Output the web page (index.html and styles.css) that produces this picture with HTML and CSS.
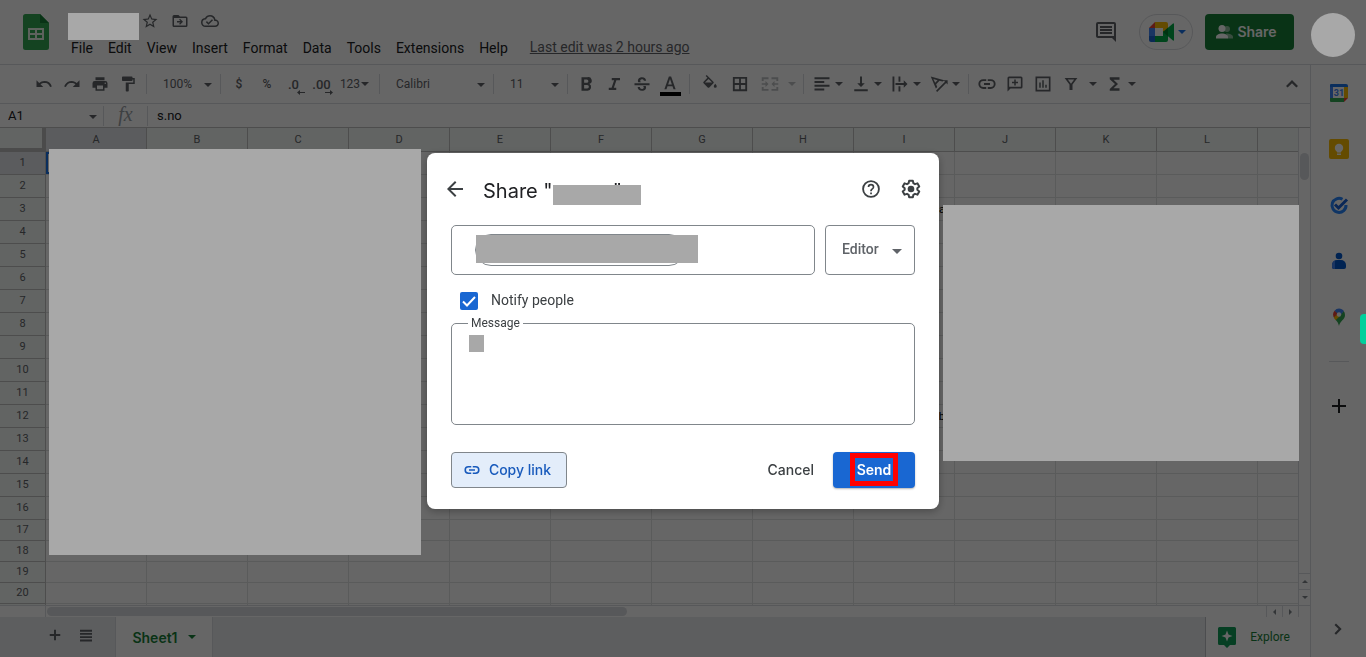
FILE: index.html
```html
<!DOCTYPE html>
<html lang="en">
<head>
<meta charset="utf-8">
<title>Sheet - Share</title>
<link rel="stylesheet" href="styles.css">
</head>
<body>
<div class="app">
  <header class="header">
    <svg class="logo" width="26" height="36" viewBox="0 0 26 36"><path fill="#34a853" d="M2.500 0H17l9 9v24.500A2.500 2.500 0 0 1 23.500 36h-21A2.500 2.500 0 0 1 0 33.500v-31A2.500 2.500 0 0 1 2.500 0z"/><path fill="#188038" d="M17 0l9 9h-9z"/><path fill="#e8f5e9" fill-rule="evenodd" d="M5 14h16v12H5zm2 2v3h5v-3zm7 0v3h5v-3zm-7 5v3h5v-3zm7 0v3h5v-3z"/></svg>
    <div class="doc">
      <div class="doc-top">
        <button class="mini" aria-label="Star"><svg width="18" height="18" viewBox="0 0 24 24"><path d="M22 9.240l-7.190-.62L12 2 9.190 8.630 2 9.240l5.460 4.730L5.820 21 12 17.270 18.180 21l-1.630-7.030L22 9.240zM12 15.400l-3.760 2.270 1-4.280-3.320-2.880 4.380-.38L12 6.100l1.710 4.040 4.380.38-3.320 2.880 1 4.280L12 15.400z"/></svg></button>
        <button class="mini" aria-label="Move"><svg width="18" height="18" viewBox="0 0 24 24"><path d="M20 6h-8l-2-2H4a2 2 0 0 0-2 2v12a2 2 0 0 0 2 2h16a2 2 0 0 0 2-2V8a2 2 0 0 0-2-2zm0 12H4V8h16v10zm-8-1l4-4-4-4-1.200 1.200L12.700 12H8v2h4.700l-1.900 1.800z"/></svg></button>
        <button class="mini" aria-label="Saved"><svg width="18" height="18" viewBox="0 0 24 24"><path d="M19.350 10.040A7.490 7.490 0 0 0 12 4C9.110 4 6.600 5.640 5.350 8.040A5.994 5.994 0 0 0 0 14c0 3.310 2.690 6 6 6h13c2.760 0 5-2.240 5-5 0-2.640-2.050-4.780-4.650-4.960zM19 18H6a4 4 0 0 1-.42-7.970l1.070-.11.500-.95A5.470 5.470 0 0 1 12 6c2.620 0 4.880 1.860 5.390 4.430l.3 1.500 1.530.11A2.980 2.980 0 0 1 19 18zm-9-3.820l-2.090-2.090L6.500 13.500 10 17l6.010-6.010-1.410-1.410z"/></svg></button>
      </div>
      <nav class="menu">
        <button>File</button><button>Edit</button><button>View</button><button>Insert</button><button>Format</button><button>Data</button><button>Tools</button><button>Extensions</button><button>Help</button>
        <a class="last" href="#">Last edit was 2 hours ago</a>
      </nav>
    </div>
    <div class="actions">
      <button class="plain" aria-label="Comments"><svg width="24" height="24" viewBox="0 0 24 24"><path fill="#5f6368" d="M22 4a2 2 0 0 0-2-2H4a2 2 0 0 0-2 2v12c0 1.100.9 2 2 2h14l4 4V4zm-2 0v12H4V4h16zM6 12h12v2H6zm0-3h12v2H6zm0-3h12v2H6z"/></svg></button>
      <button class="meet" aria-label="Meet"><svg width="25" height="20" viewBox="0 0 25 20"><path fill="#ea4335" d="M0 6l6-6v6z"/><path fill="#fbbc04" d="M6 0h11a2 2 0 0 1 2 2v5l-5 4V6H6z"/><path fill="#4285f4" d="M0 6h6v8H0z"/><path fill="#1967d2" d="M0 14h6v6H2a2 2 0 0 1-2-2z"/><path fill="#00ac47" d="M6 14h8V9l5 4v5a2 2 0 0 1-2 2H6z"/><path fill="#00ac47" d="M14 10l10-8.500a.6.6 0 0 1 1 .5v16a.6.6 0 0 1-1 .5z"/><path fill="#00832d" d="M14 10l5-4.200v8.400z"/><path fill="#fff" d="M6 6h8v8H6z"/></svg><i class="caret blue"></i></button>
      <button class="share"><svg width="17" height="14" viewBox="0 0 17 14"><circle cx="11" cy="4" r="3" fill="#8fbf9d"/><path fill="#8fbf9d" d="M10 8.500c4 0 7 1.500 7 3.500v1.500h-5z"/><circle cx="6" cy="3.500" r="3.500" fill="#fff"/><path fill="#fff" d="M0 13.500V12c0-2 3-3.500 6-3.500s6 1.500 6 3.500v1.500z"/></svg>Share</button>
    </div>
  </header>

  <div class="body">
    <main class="main">
      <div class="toolbar">
        <button class="tb" aria-label="Undo"><svg viewBox="0 0 24 24"><path d="M12.500 8c-2.650 0-5.050.99-6.900 2.600L2 7v9h9l-3.620-3.620A8 8 0 0 1 20.100 16l2.370-.78A10.500 10.500 0 0 0 12.500 8z"/></svg></button>
        <button class="tb" aria-label="Redo"><svg viewBox="0 0 24 24"><path d="M18.400 10.600A10.480 10.480 0 0 0 1.540 15.220L3.900 16a8 8 0 0 1 12.720-3.620L13 16h9V7l-3.600 3.600z"/></svg></button>
        <button class="tb" aria-label="Print"><svg viewBox="0 0 24 24"><path d="M19 8H5a3 3 0 0 0-3 3v6h4v4h12v-4h4v-6a3 3 0 0 0-3-3zm-3 11H8v-5h8v5zm3-7a1 1 0 1 1 0-2 1 1 0 0 1 0 2zM18 3H6v4h12V3z"/></svg></button>
        <button class="tb" aria-label="Paint format"><svg viewBox="0 0 24 24"><path d="M18 4V3a1 1 0 0 0-1-1H5a1 1 0 0 0-1 1v4a1 1 0 0 0 1 1h12a1 1 0 0 0 1-1V6h1v4H9v11a1 1 0 0 0 1 1h2a1 1 0 0 0 1-1v-9h8V4h-3z"/></svg></button>
        <i class="sep"></i>
        <label class="pick"><select class="zoom" aria-label="Zoom"><option>100%</option></select></label>
        <i class="sep"></i>
        <button class="tb bold">$</button>
        <button class="tb bold">%</button>
        <button class="tb bold dec">.0<svg class="under" viewBox="0 0 8 5"><path d="M0 2.500L3 0v2h5v1H3v2z"/></svg></button>
        <button class="tb bold dec">.00<svg class="under" viewBox="0 0 8 5"><path d="M8 2.500L5 0v2H0v1h5v2z"/></svg></button>
        <button class="more">123<i class="caret"></i></button>
        <i class="sep"></i>
        <label class="pick"><select class="font" aria-label="Font"><option>Calibri</option></select></label>
        <i class="sep"></i>
        <label class="pick"><select class="zoom" aria-label="Font size"><option>11</option></select></label>
        <i class="sep"></i>
        <button class="tb" aria-label="Bold"><svg viewBox="0 0 24 24"><path d="M16.500 11.800A4.600 4.600 0 0 0 13.500 3H6v18h8.200a5 5 0 0 0 2.300-9.200zM9.500 6H13a2.200 2.200 0 0 1 0 4.400H9.500zm4 12h-4v-4.700h4a2.300 2.300 0 0 1 0 4.700z"/></svg></button>
        <button class="tb" aria-label="Italic"><svg viewBox="0 0 24 24"><path d="M9 4v3h3.200L8.800 17H5v3h10v-3h-3.200l3.400-10H20V4z"/></svg></button>
        <button class="tb" aria-label="Strikethrough"><svg viewBox="0 0 24 24"><path d="M2 11h20v2.500H2zM7 9.500C5.500 6 8 3 12 3c3.500 0 5.500 2 5.500 4.800h-3C14.500 6.300 13.500 5.500 12 5.500c-2.300 0-3.200 2-1.500 4zM17 14.500c1.500 3.500-1 6.500-5 6.500-3.500 0-5.800-2-5.800-5h3c0 1.600 1.100 2.500 2.800 2.500 2.300 0 3.200-2 1.500-4z"/></svg></button>
        <button class="tb color" aria-label="Text color"><svg viewBox="0 0 24 24"><path d="M10.500 2L4.500 19h2.800l1.400-4h6.600l1.400 4h2.800l-6-17zM9.500 12.500L12 5.300l2.500 7.200z"/></svg></button>
        <i class="sep wide"></i>
        <button class="tb big" aria-label="Fill color"><svg viewBox="0 0 24 24"><path d="M16.560 8.940L7.620 0 6.210 1.410l2.380 2.380-5.150 5.150a1.500 1.500 0 0 0 0 2.120l5.500 5.500a1.500 1.500 0 0 0 2.120 0l5.500-5.500a1.500 1.500 0 0 0 0-2.120zM5.210 10L10 5.210 11.500 6.700 14.790 10zM19 11.500s-2 2.170-2 3.500a2 2 0 0 0 4 0c0-1.330-2-3.500-2-3.500z"/></svg></button>
        <button class="tb big" aria-label="Borders"><svg viewBox="0 0 24 24"><path fill-rule="evenodd" d="M2.500 2.500h19v19h-19zm2.500 2.500v5.800h5.800V5zm8.200 0v5.800H19V5zM5 13.200V19h5.800v-5.800zm8.200 0V19H19v-5.800z"/></svg></button>
        <button class="tb big faded" aria-label="Merge cells"><svg viewBox="0 0 24 24"><path d="M1 3h9v2.500H3.500V8H1zM14 3h9v5h-2.500V5.500H14zM1 16h2.500v2.500H10V21H1zM20.500 16H23v5h-9v-2.500h6.500zM1 11h5V8l4 4-4 4v-3H1zM23 11h-5V8l-4 4 4 4v-3h5z"/></svg></button>
        <button class="drop narrow faded" aria-label="Merge options"><i class="caret"></i></button>
        <i class="sep"></i>
        <button class="pair" aria-label="Horizontal align"><svg viewBox="0 0 24 24"><path d="M2 3h20v2.500H2zM2 8h13v2.500H2zM2 13h20v2.500H2zM2 18h13v2.500H2z"/></svg><i class="caret"></i></button>
        <button class="pair" aria-label="Vertical align"><svg viewBox="0 0 24 24"><path d="M10.700 2h2.600v9H17l-5 5-5-5h3.700zM3 19h18v2.500H3z"/></svg><i class="caret"></i></button>
        <button class="pair" aria-label="Wrap"><svg viewBox="0 0 24 24"><path d="M2 2h2.500v20H2zM10 2h2.500v7H10zM10 15h2.500v7H10zM6 10.800h11V7l5 5-5 5v-3.800H6z"/></svg><i class="caret"></i></button>
        <button class="pair" aria-label="Rotate"><svg viewBox="0 0 24 24"><path d="M1 2l18 5-2.300 1.500-4-.9-4.500 4.600 1.400 3.900-1.800 2L1 2zm3.500 3.300l2.400 5 3.200-3.300zM8 21L20 9l-2-2h5.500v5.500l-2-2-12 12z"/></svg><i class="caret"></i></button>
        <i class="sep"></i>
        <button class="tb" aria-label="Link"><svg viewBox="0 0 24 24"><path d="M3 12a4 4 0 0 1 4-4h4V5.500H7a6.500 6.500 0 0 0 0 13h4V16H7a4 4 0 0 1-4-4zm5 1.300h8v-2.600H8zM17 5.500h-4V8h4a4 4 0 0 1 0 8h-4v2.500h4a6.500 6.500 0 0 0 0-13z"/></svg></button>
        <button class="tb" aria-label="Comment"><svg viewBox="0 0 24 24"><path fill-rule="evenodd" d="M2 22V4a2 2 0 0 1 2-2h16a2 2 0 0 1 2 2v12a2 2 0 0 1-2 2H6zM4.200 4.200v11.600h15.600V4.200zM11 6h2v3h3v2h-3v3h-2v-3H8V9h3z"/></svg></button>
        <button class="tb" aria-label="Chart"><svg viewBox="0 0 24 24"><path fill-rule="evenodd" d="M2 2h20v20H2zm2.200 2.200v15.600h15.600V4.200zM7 10h2v7H7zm4-3h2v10h-2zm4 6h2v4h-2z"/></svg></button>
        <button class="tb" aria-label="Filter"><svg viewBox="0 0 24 24"><path fill-rule="evenodd" d="M3.500 4h17L14 12.500V20h-4v-7.500zm4.300 2L12 11.500 16.200 6z"/></svg></button>
        <button class="drop" aria-label="Filter views"><i class="caret"></i></button>
        <button class="pair" aria-label="Functions"><svg viewBox="0 0 24 24"><path d="M18 3H5v2.500l7 6.500-7 6.500V21h13v-3.200H10l6-5.800-6-5.800h8z"/></svg><i class="caret"></i></button>
        <button class="tb collapse" aria-label="Hide menus"><svg viewBox="0 0 24 24"><path d="M4 14.500l8-8 8 8-2.200 2.200L12 11l-5.800 5.700z"/></svg></button>
      </div>

      <div class="formula">
        <label class="pick"><input class="name" value="A1" aria-label="Name box"></label>
        <i class="sep tall"></i>
        <span class="fx">fx</span>
        <i class="sep tall"></i>
        <input class="value" value="s.no" aria-label="Formula">
      </div>

      <div class="sheet">
        <div class="grid"><table id="cells"></table></div>
        <div class="vbar"><i class="vthumb"></i><button aria-label="Up"><i class="tri up"></i></button><button aria-label="Down"><i class="tri down"></i></button></div>
      </div>
      <div class="hbar"><div class="track"><i class="hthumb"></i></div><button aria-label="Left"><i class="tri left"></i></button><button aria-label="Right"><i class="tri right"></i></button><span class="nook"></span></div>

      <footer class="tabs">
        <button class="tb" aria-label="Add sheet"><svg viewBox="0 0 24 24"><path d="M10.700 5h2.600v5.700H19v2.600h-5.700V19h-2.600v-5.700H5v-2.600h5.700z"/></svg></button>
        <button class="tb" aria-label="All sheets"><svg viewBox="0 0 24 24"><path d="M4 5h16v2.500H4zM4 9.300h16v2.500H4zM4 13.600h16v2.500H4zM4 18h16v2.500H4z"/></svg></button>
        <button class="tab">Sheet1<i class="caret"></i></button>
        <button class="explore"><svg width="18" height="21" viewBox="0 0 18 21"><path fill="#0f9d58" d="M1.500 0h15A1.500 1.500 0 0 1 18 1.500v15a1.500 1.500 0 0 1-1.500 1.500H12l-3 3-3-3H1.500A1.500 1.500 0 0 1 0 16.500v-15A1.500 1.500 0 0 1 1.500 0z"/><path fill="#fff" d="M9 3.500l1.500 4 4 1.500-4 1.500-1.500 4-1.500-4-4-1.500 4-1.500z"/></svg>Explore</button>
      </footer>
    </main>

    <aside class="side">
      <button aria-label="Calendar"><svg width="20" height="20" viewBox="0 0 20 20"><path fill="#1a73e8" d="M2 1h15a2 2 0 0 1 2 2v2H1V2a1 1 0 0 1 1-1z"/><path fill="#4285f4" d="M1 4h4v11H1z"/><path fill="#fbbc04" d="M15 4h4v11h-4z"/><path fill="#34a853" d="M1 15h14v4H2a1 1 0 0 1-1-1z"/><path fill="#ea4335" d="M15 15h4l-4 4z"/><path fill="#fff" d="M4 4h11v11H4z"/><text x="10" y="13" text-anchor="middle" class="cal">31</text></svg></button>
      <button aria-label="Keep"><svg width="20" height="20" viewBox="0 0 20 20"><rect width="20" height="20" rx="2" fill="#fbbc04"/><circle cx="10" cy="9" r="4.200" fill="#fff"/><path fill="#fff" d="M8 11h4v2.500H8zM8 14.500h4V16H8z"/></svg></button>
      <button aria-label="Tasks"><svg width="20" height="20" viewBox="0 0 20 20"><path fill="none" stroke="#2684fc" stroke-width="3" d="M13.500 4.300A7 7 0 1 0 17 10"/><path fill="none" stroke="#1a62d6" stroke-width="3" d="M6 9.500l3.500 3.500L18 4.500"/></svg></button>
      <button aria-label="Contacts"><svg width="20" height="20" viewBox="0 0 20 20"><circle cx="10" cy="5" r="3.300" fill="#0057cc"/><path fill="#0057cc" d="M3 14a5 5 0 0 1 5-5h4a5 5 0 0 1 5 5v2a2 2 0 0 1-2 2H5a2 2 0 0 1-2-2z"/><path fill="#4285f4" d="M3 14a5 5 0 0 1 3-4.600V18H5a2 2 0 0 1-2-2z"/></svg></button>
      <button aria-label="Maps"><svg width="20" height="20" viewBox="0 0 20 20"><path fill="#34a853" d="M16 8c0 5-5 5.500-6 11-.6-3-2-4.500-3.500-6.200L14.600 4A6.300 6.300 0 0 1 16 8z"/><path fill="#4285f4" d="M10 1.500c2 0 3.800 1 4.900 2.600L10 10 5.500 3.700A6 6 0 0 1 10 1.500z"/><path fill="#ea4335" d="M5.500 3.700L10 8l-4.500 3.500C3.500 9 3.600 5.800 5.500 3.700z"/><path fill="#fbbc04" d="M4.800 10.500L8.500 7l2 2.500-4 3.800z"/><circle cx="10" cy="7.500" r="2.200" fill="#fff"/></svg></button>
      <hr>
      <button aria-label="Add-ons"><svg width="20" height="20" viewBox="0 0 20 20"><path fill="#202124" d="M9 3h2v6h6v2h-6v6H9v-6H3V9h6z"/></svg></button>
      <button class="hide" aria-label="Hide side panel"><svg width="18" height="18" viewBox="0 0 24 24"><path fill="#5f6368" d="M6 6.500l5.500 5.500L6 17.500l2 2 7.500-7.500L8 4.500z"/></svg></button>
    </aside>
  </div>
</div>

<div class="scrim">
  <section class="dialog" role="dialog" aria-labelledby="title">
    <div class="head">
      <button class="plain" aria-label="Back"><svg width="24" height="24" viewBox="0 0 24 24"><path fill="#3c4043" d="M20 11H7.830l5.590-5.590L12 4l-8 8 8 8 1.410-1.410L7.830 13H20z"/></svg></button>
      <h1 id="title">Share "<span class="hidden-name">v<span class="mask"></span></span>"</h1>
      <button class="plain" aria-label="Help"><svg width="20" height="20" viewBox="0 0 24 24"><circle cx="12" cy="12" r="9.500" fill="none" stroke="#3c4043" stroke-width="2.200"/><path fill="#3c4043" d="M11 16.200h2.100v2.100H11zM12 5.700A4 4 0 0 0 8 9.700h2a2 2 0 1 1 4 0c0 2-3 1.800-3 5h2c0-2.200 3-2.500 3-5a4 4 0 0 0-4-4z"/></svg></button>
      <button class="plain" aria-label="Settings"><svg width="20" height="20" viewBox="0 0 24 24"><path fill="none" stroke="#3c4043" stroke-width="2.400" stroke-linejoin="round" d="M9.800 2h4.400l.6 3 2 1.200 2.900-1 2.200 3.800-2.300 2v2l2.300 2-2.200 3.800-2.900-1-2 1.200-.6 3H9.800l-.6-3-2-1.200-2.900 1L2.100 15l2.300-2v-2L2.100 9l2.200-3.800 2.900 1 2-1.200z"/><circle cx="12" cy="12" r="4" fill="#3c4043"/></svg></button>
    </div>
    <div class="people">
      <div class="to"><span class="chip"><span class="mask"></span></span><input aria-label="Add people"></div>
      <label class="pick role"><select aria-label="Role"><option>Editor</option></select></label>
    </div>
    <label class="notify"><input type="checkbox" checked><svg width="18" height="18" viewBox="0 0 18 18"><path fill="none" stroke="#fff" stroke-width="2" d="M3 9.500l4 4 8-8.500"/></svg><span>Notify people</span></label>
    <fieldset class="message"><legend>Message</legend><span class="mask"></span><textarea aria-label="Message"></textarea></fieldset>
    <div class="foot">
      <button class="copy"><svg width="18" height="18" viewBox="0 0 24 24"><path fill="#185abc" d="M4 12a3.200 3.200 0 0 1 3.200-3.200H11V6.700H7.200a5.300 5.300 0 0 0 0 10.600H11v-2.100H7.200A3.200 3.200 0 0 1 4 12zm4 1.100h8v-2.200H8zM16.800 6.700H13v2.100h3.800a3.200 3.200 0 0 1 0 6.400H13v2.100h3.800a5.300 5.300 0 0 0 0-10.600z"/></svg>Copy link</button>
      <button class="cancel">Cancel</button>
      <button class="send"><span>Send</span></button>
    </div>
  </section>
</div>
<div class="cover cover-title"></div>
<div class="cover cover-left"></div>
<div class="cover cover-right"></div>
<div class="cover avatar"></div>
<div class="handle"></div>
<script src="grid.js"></script>
</body>
</html>
```
FILE: grid.js
```
const table = document.getElementById('cells');
const text = { I3: 'aa', I12: 'b' };
const columns = 'ABCDEFGHIJKLM'.split('');
let html = '<colgroup><col class="c0">' + columns.map(() => '<col class="c">').join('') + '</colgroup><tr class="top"><th class="corner"></th>';
html += columns.map((c) => `<th class="${c === 'A' ? 'on' : ''}">${c === 'M' ? '' : c}</th>`).join('') + '</tr>';
for (let r = 1; r <= 21; r++) {
  html += `<tr class="${r > 16 ? 'short' : ''}"><th class="${r === 1 ? 'on' : ''}">${r > 20 ? '' : r}</th>`;
  html += columns.map((c) => `<td class="${c + r === 'A1' ? 'active' : ''}">${text[c + r] || ''}</td>`).join('') + '</tr>';
}
table.innerHTML = html;
```
FILE: styles.css
```css
* { box-sizing: border-box; }
body { margin: 0; font-family: Roboto, sans-serif; font-size: 14px; color: #202124; overflow: hidden; }
button, input, select, textarea { font: inherit; color: inherit; border: 0; padding: 0; margin: 0; background: none; outline: 0; }
button { display: flex; align-items: center; justify-content: center; white-space: nowrap; }
svg { display: block; flex: none; }
.app { display: flex; flex-direction: column; height: 100vh; background: #fff; }

.header { display: flex; height: 65px; flex: none; border-bottom: 1px solid #dadce0; }
.logo { margin: 14px 15px 0 23px; }
.doc { flex: 1; padding-top: 11px; }
.doc-top { display: flex; gap: 12px; padding-left: 77px; height: 20px; }
.mini svg { fill: #5f6368; }
.menu { display: flex; align-items: center; height: 34px; gap: 15px; padding-left: 7px; }
.last { color: #5f6368; margin: 0 0 2px 7px; }
.actions { display: flex; padding: 14px 72px 0 0; height: 50px; align-items: center; }
.meet { width: 54px; height: 36px; border: 1px solid #dadce0; border-radius: 18px; margin: 0 12px 0 21px; padding-left: 2px; gap: 4px; }
.share { width: 89px; height: 36px; padding: 0 6px 1px 0; border-radius: 4px; background: #188038; color: #fff; gap: 4px; font-family: Inter, sans-serif; font-weight: 600; }
.caret { width: 0; height: 0; flex: none; border: 4px solid transparent; border-top-color: currentColor; border-bottom: 0; }
.blue { color: #1a73e8; }

.body { display: flex; flex: 1; min-height: 0; }
.main { display: flex; flex-direction: column; flex: 1; min-width: 0; }
.toolbar { display: flex; align-items: center; height: 39px; flex: none; padding-left: 30px; border-bottom: 1px solid #dadce0; font-size: 12px; color: #5f6368; }
.tb { width: 28px; height: 28px; flex: none; }
.tb svg, .pair svg { width: 18px; height: 18px; fill: #5f6368; }
.bold { font-weight: 500; }
.dec { position: relative; padding-right: 3px; font-size: 13px; }
.tb .under { position: absolute; width: 8px; height: 5px; right: 4px; bottom: 3px; }
.sep { width: 1px; height: 20px; background: #dadce0; margin: 0 4px; flex: none; }
.wide { margin: 0 5px; }
.pick { position: relative; display: flex; }
.pick::after { content: ""; position: absolute; right: 4px; top: 50%; margin-top: -1px; border: 4px solid transparent; border-top-color: currentColor; border-bottom: 0; pointer-events: none; }
.pick select { appearance: none; padding-left: 12px; }
.toolbar select { padding-bottom: 1px; }
.zoom { width: 65px; }
.font { width: 105px; }
.more { width: 38px; padding-right: 3px; gap: 1px; }
.color { position: relative; }
.color::after { content: ""; position: absolute; left: 4px; right: 3px; bottom: 2px; height: 4px; background: #000; }
.big { width: 30px; }
.drop { width: 16px; height: 28px; }
.narrow { width: 14px; }
.pair { width: 39px; height: 28px; gap: 4px; }
.faded { opacity: .4; }
.collapse { margin-left: auto; margin-right: 4px; }

.formula { display: flex; align-items: center; height: 24px; flex: none; border-bottom: 1px solid #c0c0c0; font-size: 13px; }
.formula .pick { color: #5f6368; }
.formula .pick::after { right: 2px; }
.name { width: 99px; padding-left: 8px; color: #202124; }
.formula .sep { margin: 0 0 0 4px; }
.fx { width: 39px; padding: 0 0 3px 4px; text-align: center; font-family: "Liberation Serif", serif; font-style: italic; font-size: 20px; line-height: 20px; color: #9aa0a6; }
.value { flex: 1; padding-left: 9px; }

.sheet { display: flex; flex: 1; min-height: 0; border-bottom: 1px solid #dadce0; }
.grid { flex: 1; min-width: 0; overflow: hidden; }
#cells { border-collapse: separate; border-spacing: 0; table-layout: fixed; width: 1359px; font-size: 11px; }
.c0 { width: 46px; }
.c { width: 101px; }
#cells th { padding: 0; font-weight: 400; color: #5f6368; background: #f5f9f7; border: solid #c0c0c0; border-width: 0 1px 1px 0; }
#cells tr:not(.top) th { padding-bottom: 2px; }
#cells td { padding: 0 9px 0 0; text-align: right; border: solid #e2e3e3; border-width: 0 1px 1px 0; color: #000; }
#cells tr { height: 23px; }
#cells .top { height: 24px; }
#cells .short { height: 21px; }
#cells .on { background: #e4e6ea; }
#cells .corner { border: solid #bcbcbc; border-width: 0 4px 4px 0; }
.active { box-shadow: inset 0 0 0 2px #1a73e8; }
.vbar { display: flex; flex-direction: column; width: 12px; border-left: 1px solid #dadce0; }
.vthumb { width: 9px; height: 27px; margin: 25px 1px auto; border-radius: 5px; background: #dadce0; }
.vbar button { height: 16px; border-top: 1px solid #dadce0; }
.tri { border: 3px solid transparent; color: #80868b; }
.up { border-top: 0; border-bottom-color: currentColor; }
.down { border-bottom: 0; border-top-color: currentColor; }
.left { border-left: 0; border-right-color: currentColor; }
.right { border-right: 0; border-left-color: currentColor; }
.hbar { display: flex; height: 11px; flex: none; }
.hbar button { width: 16px; border-left: 1px solid #dadce0; }
.track { flex: 1; margin-left: 45px; border-left: 1px solid #dadce0; padding: 1px; }
.hthumb { display: block; width: 580px; height: 9px; border-radius: 5px; background: #dadce0; }
.nook { width: 12px; border-left: 1px solid #dadce0; }
.tabs { display: flex; align-items: center; height: 40px; flex: none; padding-left: 41px; gap: 3px; background: #e8eaed; }
.tabs .tb { padding-bottom: 4px; }
.tab { width: 98px; height: 40px; margin-left: 12px; background: #fff; border: solid #dadce0; border-width: 0 1px; gap: 10px; color: #188038; font-family: Inter, sans-serif; font-weight: 600; }
.explore { margin-left: auto; width: 105px; height: 40px; padding-right: 8px; background: #fff; border-left: 1px solid #bdc1c6; gap: 14px; font-size: 12px; color: #188038; }

.side { display: flex; flex-direction: column; align-items: center; width: 56px; flex: none; border-left: 1px solid #dadce0; }
.side button { width: 40px; height: 56px; }
.side hr { width: 20px; height: 1px; border: 0; margin: 16px 0; background: #dadce0; }
.side .hide { margin-top: auto; }
.cal { font-size: 9px; font-weight: 700; fill: #4285f4; }

.scrim { position: fixed; inset: 0; display: flex; align-items: center; justify-content: center; padding-top: 5px; background: rgba(0, 0, 0, .6); }
.dialog { width: 512px; padding: 16px 24px 21px; border-radius: 8px; background: #fff; box-shadow: 0 2px 8px rgba(0, 0, 0, .3); }
.head { display: flex; align-items: center; height: 40px; margin: 0 -6px 16px -8px; gap: 20px; }
.head h1 { flex: 1; margin: 0 0 0 -4px; padding-top: 4px; font: 400 20px/36px Inter, sans-serif; white-space: nowrap; }
.hidden-name { position: relative; display: inline-block; width: 60px; }
.mask { display: block; background: #a8a8a8; }
.hidden-name .mask { position: absolute; left: 0; top: 12px; width: 88px; height: 20px; }
.people { display: flex; gap: 10px; }
.to { display: flex; align-items: center; flex: 1; min-width: 0; height: 50px; padding-left: 23px; border: 1px solid #80868b; border-radius: 5px; }
.to input { flex: 1; min-width: 0; }
.chip { position: relative; flex: none; width: 210px; height: 32px; border: 1px solid #80868b; border-radius: 16px; }
.chip .mask { position: absolute; left: 0; top: 0; width: 222px; height: 28px; }
.role { flex: none; width: 90px; border: 1px solid #80868b; border-radius: 4px; color: #5f6368; font-weight: 500; }
.role select { width: 100%; padding: 0 0 2px 16px; }
.pick.role::after { right: 12px; border-width: 5px 5px 0; }
.notify { position: relative; display: flex; align-items: center; height: 18px; margin: 17px 0 6px 9px; gap: 13px; color: #3c4043; }
.notify span { padding-bottom: 2px; }
.notify input { appearance: none; width: 18px; height: 18px; border-radius: 2px; background: #1967d2; }
.notify svg { position: absolute; left: 0; top: 0; }
.message { display: flex; height: 109px; margin: 0; padding: 5px 16px 8px; border: 1px solid #80868b; border-radius: 5px; font-size: 12px; color: #3c4043; }
.message legend { padding: 0 3px; height: 14px; line-height: 14px; }
.message .mask { width: 15px; height: 17px; margin-left: 1px; }
.message textarea { flex: 1; resize: none; }
.foot { display: flex; margin-top: 27px; font-family: Inter, sans-serif; }
.foot button { height: 36px; border-radius: 4px; }
.copy { width: 116px; margin-right: auto; gap: 8px; border: 1px solid #80868b; background: #e3edfa; color: #185abc; font-weight: 500; }
.foot .copy { padding: 0 4px 1px 0; }
.cancel { color: #3c4043; font-weight: 500; }
.foot .cancel { padding: 0 19px 1px; }
.send { width: 82px; background: #1967d2; color: #fff; font-weight: 600; box-shadow: 0 1px 2px rgba(0, 0, 0, .3); }
.foot .send { padding-bottom: 1px; }
.send span { padding: 3px 2px; border: 5px solid #f00; line-height: 17px; }

.cover { position: absolute; background: #a8a8a8; }
.cover-title { left: 68px; top: 13px; width: 71px; height: 27px; }
.cover-left { left: 49px; top: 149px; width: 372px; height: 406px; }
.cover-right { left: 943px; top: 205px; width: 356px; height: 256px; }
.avatar { right: 11px; top: 13px; width: 44px; height: 44px; border-radius: 50%; }
.handle { position: absolute; right: 0; top: 314px; width: 6px; height: 30px; border-radius: 4px 0 0 4px; background: #00d09c; }
```
